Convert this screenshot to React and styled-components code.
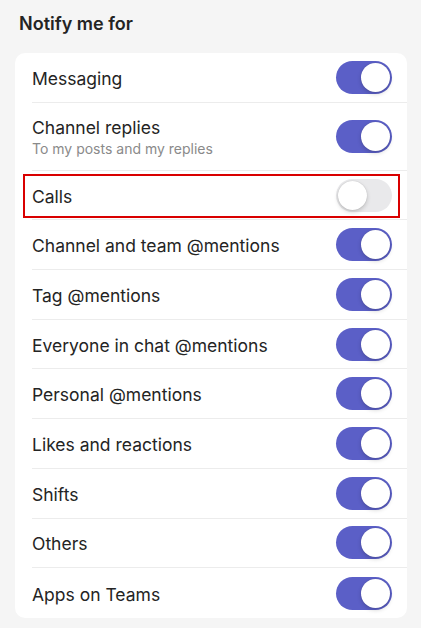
import React, { useState } from 'react';
import styled, { createGlobalStyle } from 'styled-components';

const GlobalStyle = createGlobalStyle`
  html, body {
    margin: 0;
    padding: 0;
    background: #f5f5f5;
  }
  body {
    font-family: Inter, "Liberation Sans", sans-serif;
    -webkit-font-smoothing: antialiased;
  }
`;

const items = [
  { label: 'Messaging', on: true },
  { label: 'Channel replies', sub: 'To my posts and my replies', on: true },
  { label: 'Calls', on: false, marked: true },
  { label: 'Channel and team @mentions', on: true },
  { label: 'Tag @mentions', on: true },
  { label: 'Everyone in chat @mentions', on: true },
  { label: 'Personal @mentions', on: true },
  { label: 'Likes and reactions', on: true },
  { label: 'Shifts', on: true },
  { label: 'Others', on: true },
  { label: 'Apps on Teams', on: true },
];

function App() {
  const [values, setValues] = useState(items.map((i) => i.on));

  const flip = (idx) => {
    setValues((v) => v.map((x, i) => (i === idx ? !x : x)));
  };

  return (
    <Page>
      <GlobalStyle />
      <Title>Notify me for</Title>
      <Card>
        {items.map((item, idx) => (
          <Row key={item.label} $tall={!!item.sub} $last={idx === items.length - 1}>
            {item.marked && <Marker />}
            <Texts $tall={!!item.sub}>
              <Label>{item.label}</Label>
              {item.sub && <Sub>{item.sub}</Sub>}
            </Texts>
            <Switch $on={values[idx]} onClick={() => flip(idx)}>
              <Knob $on={values[idx]} />
            </Switch>
          </Row>
        ))}
      </Card>
    </Page>
  );
}

const Page = styled.div`
  width: 421px;
  height: 628px;
  box-sizing: border-box;
  padding: 12px 14px 0 15px;
  overflow: hidden;
`;

const Title = styled.h2`
  margin: 0 0 17px 4px;
  font-size: 18px;
  line-height: 24px;
  font-weight: 600;
  color: #242424;
`;

const Card = styled.div`
  background: #ffffff;
  border-radius: 10px;
  padding-left: 17px;
`;

const Row = styled.div`
  position: relative;
  box-sizing: border-box;
  display: flex;
  align-items: center;
  justify-content: space-between;
  height: ${(p) => (p.$tall ? '68px' : '49.7px')};
  padding-right: 15px;
  border-bottom: ${(p) => (p.$last ? 'none' : '1px solid #ececec')};
`;

const Marker = styled.div`
  position: absolute;
  left: -9px;
  right: 7px;
  top: 3px;
  bottom: 1px;
  border: 2px solid #d90000;
  pointer-events: none;
`;

const Texts = styled.div`
  display: flex;
  flex-direction: column;
  padding-top: ${(p) => (p.$tall ? '2px' : '3px')};
`;

const Label = styled.span`
  font-size: 17.5px;
  line-height: 22px;
  color: #242424;
`;

const Sub = styled.span`
  font-size: 14px;
  line-height: 19px;
  color: #8a8a8a;
`;

const Switch = styled.div`
  position: relative;
  width: 56px;
  height: 33px;
  border-radius: 17px;
  background: ${(p) => (p.$on ? '#5b5fc7' : '#e9e9eb')};
  cursor: pointer;
  flex-shrink: 0;
`;

const Knob = styled.div`
  position: absolute;
  top: 2px;
  left: ${(p) => (p.$on ? '25px' : '2px')};
  width: 29px;
  height: 29px;
  border-radius: 50%;
  background: #ffffff;
  box-shadow: 0 2px 4px rgba(0, 0, 0, 0.18), 0 0 1px rgba(0, 0, 0, 0.2);
`;

export default App;
